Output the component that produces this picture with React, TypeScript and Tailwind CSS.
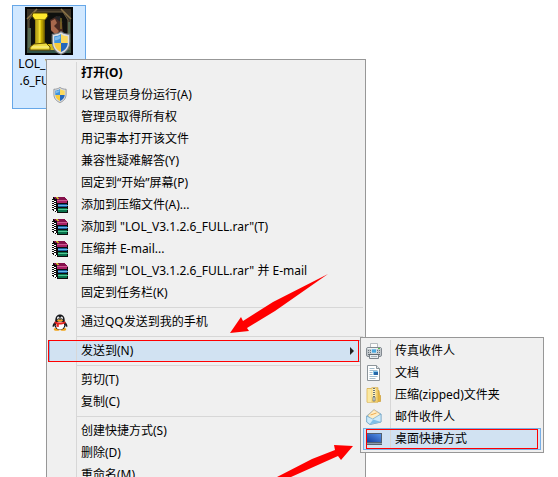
import type { ReactNode } from 'react';

function Shield({ className }: { className: string }) {
  return (
    <svg viewBox="0 0 16 18" preserveAspectRatio="none" className={className} aria-hidden="true">
      <path d="M8 .5C6 2 3.500 2.500 1 2.500V8c0 5 3 8 7 9.500C12 16 15 13 15 8V2.500C12.500 2.500 10 2 8 .5Z" fill="#dcdfe2" stroke="#777c81" strokeWidth=".8" />
      <path d="M8 2.300C6.500 3.400 4.500 4 2.600 4v5H8Z" fill="#3f93dc" />
      <path d="M8 2.300C9.500 3.400 11.500 4 13.400 4v5H8Z" fill="#fbd95c" />
      <path d="M2.600 9H8v6.800C4.800 14.400 2.800 12.200 2.600 9Z" fill="#f9cc3c" />
      <path d="M13.400 9H8v6.800c3.200-1.400 5.200-3.600 5.400-6.800Z" fill="#2468bd" />
      <path d="M3.200 4.600c1.500-.1 3-.5 4.200-1.200v2C6 6.400 4.500 7 3.200 7Z" fill="#7fbbec" />
    </svg>
  );
}

function Books() {
  return (
    <svg viewBox="0 0 16 16" className="size-4" shapeRendering="crispEdges" aria-hidden="true">
      <path d="M1 0h12v1h1v1h1v2h1v12H5v-1H3v-1H1v-1H0V2h1z" fill="#0c0c0c" />
      <path d="M2 0h11v1h1v1h1v1H5V2H3V1H2z" fill="#85104b" />
      <path d="M4 0h2v1h1v1H5V1H4z" fill="#c8b824" />
      <path d="M5 3h11v1H5z" fill="#c9588f" />
      <path d="M5 4h10v2H5z" fill="#a81f64" />
      <path d="M6 7h9v3H6z" fill="#155b9c" />
      <path d="M6 8h10v1H6z" fill="#63b4e6" />
      <path d="M6 11h9v4H6z" fill="#08704a" />
      <path d="M6 12h10v1H6z" fill="#4fc894" />
      <path
        d="M0 3h2v1h2v1H2V4H0zM0 5h2v1h2v1H2V6H0zM0 7h2v1h2v1H2V8H0zM0 9h2v1h2v1H2v-1H0zM0 11h2v1h2v1H2v-1H0zM2 13h2v1h1v1H4v-1H2z"
        fill="#fff"
      />
    </svg>
  );
}

function Penguin() {
  return (
    <svg viewBox="0 0 16 17" className="h-[17px] w-4" aria-hidden="true">
      <ellipse cx="4.800" cy="15.300" rx="3" ry="1.500" fill="#f1a51c" />
      <ellipse cx="11.200" cy="15.300" rx="3" ry="1.500" fill="#f1a51c" />
      <path d="M3 8C.8 9.500.2 12 .8 13c.7.300 1.500-1 2-2Zm10 0c2.200 1.500 2.800 4 2.200 5-.7.300-1.500-1-2-2Z" fill="#18181c" />
      <ellipse cx="8" cy="10.500" rx="5.700" ry="5.200" fill="#18181c" />
      <ellipse cx="8" cy="11.300" rx="4.200" ry="4.300" fill="#fff" />
      <path d="M3.200 7.500C3.200 2.500 5 .5 8 .5s4.800 2 4.800 7Z" fill="#18181c" />
      <ellipse cx="6.300" cy="4" rx="1.200" ry="1.600" fill="#fff" />
      <ellipse cx="9.700" cy="4" rx="1.200" ry="1.600" fill="#fff" />
      <circle cx="6.600" cy="4.200" r=".5" fill="#111" />
      <circle cx="9.400" cy="4.200" r=".5" fill="#111" />
      <ellipse cx="8" cy="6.500" rx="3" ry="1" fill="#f6a91a" />
      <path d="M2.800 7.300c3.200 1.700 7.200 1.700 10.400 0l.3 1.900c-2.500 1.200-4.900 1.500-6.700 1.300v2.500l-2.500-.2.200-2.800-2-.8Z" fill="#e3231d" />
    </svg>
  );
}

function Printer() {
  return (
    <svg viewBox="0 0 16 16" className="size-4" aria-hidden="true">
      <path d="M4.500.5h7v5h-7z" fill="#fbfbfb" stroke="#b7bcc0" />
      <rect x=".5" y="4.500" width="15" height="9" rx="1.500" fill="#c3c8cc" stroke="#838a91" />
      <path d="M1.500 5.500h13" stroke="#edf1f3" />
      <path d="M5.500 6h5v4h-5z" fill="#48a7df" stroke="#f4f6f7" strokeWidth=".6" />
      <path d="M2 7.500h3M2 9.500h3M11 7.500h3M11 9.500h3" stroke="#6b757d" strokeDasharray="1 1" />
      <path d="M12 5h2v1h-2z" fill="#55bd4b" />
      <path d="M3.500 11.500h9v4h-9z" fill="#e8edf0" stroke="#7b838a" />
      <path d="M2 11.500h12" stroke="#626b72" />
      <path d="M5 13.500h6" stroke="#a9b2b9" />
    </svg>
  );
}

function Document() {
  return (
    <svg viewBox="0 0 16 16" className="size-4" aria-hidden="true">
      <path d="M1.500.5h9l3 3v12h-12z" fill="#fff" stroke="#8c949a" />
      <path d="M10.500.5v3h3" fill="#dde5ea" stroke="#8c949a" />
      <path d="M3.500 3.500h5M3.500 5.500h8M3.500 7.500h3M3.500 9.500h3M3.500 11.500h8M3.500 13.500h6" stroke="#a3bccd" />
      <path d="M7 6h5v4H7z" fill="#82c6ec" />
      <path d="M8 7h4v3H8z" fill="#2466a8" />
    </svg>
  );
}

function ZipFolder() {
  return (
    <svg viewBox="0 0 16 16" className="size-4" aria-hidden="true">
      <path d="M11 3.500h2l.5 4 1 1v6h-5z" fill="#e4b53f" stroke="#cb9c35" strokeWidth=".7" />
      <path d="M1 1.500h4l1-.8h6v14.500H1z" fill="#f3d173" stroke="#d5aa42" strokeWidth=".7" />
      <path d="M1.500 2h4v13h-4z" fill="#fae8a2" />
      <path d="M8 1v10.500" stroke="#fff4c5" strokeWidth="3" />
      <path d="M8 1v10.500" stroke="#6c7478" strokeWidth="2" strokeDasharray="1 1" />
      <path d="M7 10h2v4H7z" fill="#dce2e4" stroke="#626b6e" strokeWidth=".7" />
    </svg>
  );
}

function Envelope() {
  return (
    <svg viewBox="0 0 16 16" className="size-4" aria-hidden="true">
      <path d="M.7 7 8 .7 15 5v8L4 15.500.7 13Z" fill="#8ac6e8" stroke="#719fbd" strokeWidth=".6" />
      <path d="m2 6.500 6-5.700L14 5l-1 5-7 2Z" fill="#ffedc4" stroke="#e8b16c" strokeWidth=".6" />
      <path d="m4.500 6 6-2" stroke="#efab4e" />
      <path d="m.7 7 6 3L15 5v8L4 15.500.7 13Z" fill="#cdeafa" stroke="#639cc3" strokeWidth=".6" />
      <path d="m3.500 15.200 3.700-4.700L15 13Z" fill="#7fbfe8" />
    </svg>
  );
}

function Desktop() {
  return (
    <svg viewBox="0 0 16 12" className="h-3 w-4" aria-hidden="true">
      <defs>
        <linearGradient id="screen" x1="0" y1="1" x2="1" y2="0">
          <stop stopColor="#143e9c" />
          <stop offset="1" stopColor="#5591e8" />
        </linearGradient>
      </defs>
      <path d="M0 0h16v12H0z" fill="#536170" />
      <path d="M1 1h14v8H1z" fill="url(#screen)" />
      <path d="M0 10.500h16" stroke="#8a9bad" />
    </svg>
  );
}

function GameIcon() {
  return (
    <svg viewBox="0 0 48 48" className="size-12" aria-hidden="true">
      <defs>
        <linearGradient id="pillar">
          <stop stopColor="#8a7500" />
          <stop offset=".35" stopColor="#fff04b" />
          <stop offset=".65" stopColor="#d9bd00" />
          <stop offset="1" stopColor="#5c4a00" />
        </linearGradient>
        <linearGradient id="frame" x2="0" y2="1">
          <stop stopColor="#3a2f22" />
          <stop offset="1" stopColor="#3c4f40" />
        </linearGradient>
      </defs>
      <path d="M0 0h48v48H0z" fill="#050505" />
      <path d="M2 2h44v44H2z" fill="url(#frame)" />
      <path d="M10 5h28l5 8v28H4V13Z" fill="#0f100e" stroke="#6b5b3e" />
      <path d="M2 12 12 2M36 2l10 10" stroke="#8b7346" strokeWidth="1.500" />
      <path d="M3 21h3v20H3zM43 15h2v28h-2z" fill="#55684f" />
      <path d="m25 13 7-4 5 6 1 10-6 4-6-5Z" fill="#4a2a22" />
      <path d="m26 14 4-2 2 4-3 3 5 5-3 4-5-5" fill="#a8684c" />
      <path d="m29 10 6-1 3 7-4-2Z" fill="#252528" />
      <path d="M36 11v11" stroke="#a08d28" />
      <path d="M26 29h12v10H26z" fill="#1f2a18" />
      <path d="M23 37h14v6H17l6-3Z" fill="#d0b913" />
      <path d="M8 6h14l1 3-3 4H10L7 9Z" fill="#ffe72d" stroke="#564400" />
      <path d="M10 13h10v24H10z" fill="url(#pillar)" />
      <path d="M13 13v24M17 13v24" stroke="#ac9400" />
      <path d="m9 37 12-1 4 4v3H5v-3Z" fill="#eedb43" stroke="#665200" />
      <path d="M7 40h17" stroke="#fff59b" />
      <path d="M4 45h40" stroke="#31554b" strokeWidth="2" />
    </svg>
  );
}

type Entry = { label: string; icon?: ReactNode; bold?: boolean };

const groups: Entry[][] = [
  [
    { label: '打开(O)', bold: true },
    { label: '以管理员身份运行(A)', icon: <Shield className="h-4 w-3.5" /> },
    { label: '管理员取得所有权' },
    { label: '用记事本打开该文件' },
    { label: '兼容性疑难解答(Y)' },
    { label: '固定到“开始”屏幕(P)' },
    { label: '添加到压缩文件(A)...', icon: <Books /> },
    { label: '添加到 "LOL_V3.1.2.6_FULL.rar"(T)', icon: <Books /> },
    { label: '压缩并 E-mail...', icon: <Books /> },
    { label: '压缩到 "LOL_V3.1.2.6_FULL.rar" 并 E-mail', icon: <Books /> },
    { label: '固定到任务栏(K)' },
  ],
  [{ label: '通过QQ发送到我的手机', icon: <Penguin /> }],
  [{ label: '发送到(N)' }],
  [{ label: '剪切(T)' }, { label: '复制(C)' }],
  [{ label: '创建快捷方式(S)' }, { label: '删除(D)' }, { label: '重命名(M)' }],
];

const targets: Entry[] = [
  { label: '传真收件人', icon: <Printer /> },
  { label: '文档', icon: <Document /> },
  { label: '压缩(zipped)文件夹', icon: <ZipFolder /> },
  { label: '邮件收件人', icon: <Envelope /> },
  { label: '桌面快捷方式', icon: <Desktop /> },
];

function MenuRow({ entry, submenu, selected }: { entry: Entry; submenu?: boolean; selected?: boolean }) {
  return (
    <button
      type="button"
      role="menuitem"
      aria-haspopup={submenu ? 'menu' : undefined}
      className={`relative flex h-[22px] w-full items-center text-left whitespace-nowrap ${
        submenu || selected ? 'bg-[#d1e2f2] outline-1 -outline-offset-1 outline-[#78aee5]' : ''
      }`}
    >
      <span className="flex h-full w-7 shrink-0 items-center justify-center border-r border-[#d7d7d7] pr-[5px]">{entry.icon}</span>
      <span className={`grow pb-0.5 pl-1 ${entry.bold ? 'font-bold' : ''}`}>{entry.label}</span>
      {submenu && (
        <>
          <svg viewBox="0 0 4 8" className="mr-[9px] h-2 w-1" aria-hidden="true">
            <path d="M0 0 4 4 0 8Z" fill="#222" />
          </svg>
          <span className="absolute inset-y-0 right-1 -left-px border border-[#ff0000]" />
        </>
      )}
      {selected && <span className="absolute inset-x-[3px] inset-y-px border border-[#ff0000]" />}
    </button>
  );
}

export default function App() {
  return (
    <main className="relative h-screen overflow-hidden bg-white font-['Noto_Sans','Noto_Sans_CJK_SC',sans-serif] text-[12px] leading-[17px] text-black">
      <div className="pt-[5px] pl-3">
        <button type="button" className="flex h-[104px] w-[74px] flex-col items-center border border-[#66a7e8] bg-[#d1e8ff] pt-px">
          <span className="relative">
            <GameIcon />
            <Shield className="absolute right-0.5 bottom-0 h-6 w-5" />
          </span>
          <span>
            LOL_V3.1.2
            <br />
            .6_FULL.ex
          </span>
        </button>
      </div>

      <div role="menu" className="absolute top-[59px] left-[46px] w-80 border border-[#979797] bg-[#f0f0f0] p-0.5">
        {groups.map((group, index) => (
          <div key={group[0].label} role="group">
            {index > 0 && (
              <div role="separator" className="flex h-[7px]">
                <span className="w-7 border-r border-[#d7d7d7]" />
                <span className="mt-[3px] h-px grow bg-[#d7d7d7]" />
              </div>
            )}
            {group.map((entry) => (
              <MenuRow key={entry.label} entry={entry} submenu={entry.label === '发送到(N)'} />
            ))}
          </div>
        ))}
      </div>

      <div role="menu" className="absolute top-[337px] left-[360px] w-[184px] border border-[#979797] bg-[#f0f0f0] p-0.5">
        {targets.map((entry) => (
          <MenuRow key={entry.label} entry={entry} selected={entry.label === '桌面快捷方式'} />
        ))}
      </div>

      <svg viewBox="0 0 98 60" className="absolute top-[274px] left-[230px] h-[60px] w-[98px]" aria-hidden="true">
        <path d="M98 0 45 37 17 54 19 57 0 59 11 43 13 47 43 28Z" fill="#ff0000" />
      </svg>
      <svg viewBox="0 0 76 33" className="absolute top-[444px] left-[277px] h-[33px] w-[76px]" aria-hidden="true">
        <path d="M0 33 35 15 58 6 57 1 76 2 64 16 61 12 14 33Z" fill="#ff0000" />
      </svg>
    </main>
  );
}
